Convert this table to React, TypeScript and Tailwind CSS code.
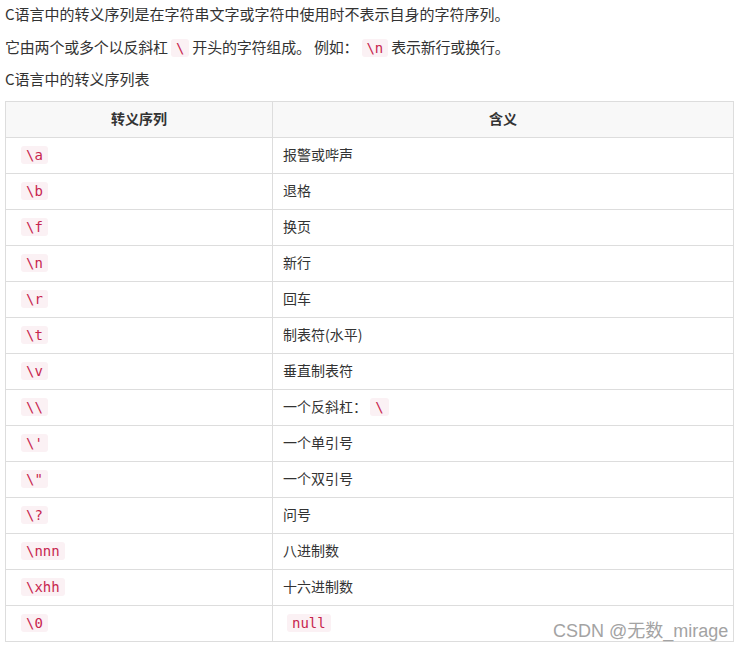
const rows: [string, React.ReactNode][] = [
  ["\\a", "报警或哔声"],
  ["\\b", "退格"],
  ["\\f", "换页"],
  ["\\n", "新行"],
  ["\\r", "回车"],
  ["\\t", "制表符(水平)"],
  ["\\v", "垂直制表符"],
  ["\\\\", <>一个反斜杠： <Code>\</Code></>],
  ["\\'", "一个单引号"],
  ['\\"', "一个双引号"],
  ["\\?", "问号"],
  ["\\nnn", "八进制数"],
  ["\\xhh", "十六进制数"],
  ["\\0", <span className="pl-1"><Code>null</Code></span>],
];

function Code({ children }: { children: React.ReactNode }) {
  return (
    <code className="rounded-[3px] bg-[#fbf1f4] px-[5px] py-[1px] font-['DejaVu_Sans_Mono',monospace] text-[14px] leading-[16px] text-[#c7254e]">
      {children}
    </code>
  );
}

export default function App() {
  return (
    <div className="relative h-[651px] w-[743px] bg-white pl-[5px] font-['Noto_Sans_CJK_SC','Noto_Sans',sans-serif] text-[#333]">
      <p className="h-[28px] text-[15px] leading-[28px]">
        C语言中的转义序列是在字符串文字或字符中使用时不表示自身的字符序列。
      </p>
      <p className="mt-[4.5px] h-[28px] text-[15px] leading-[28px] tracking-[-0.2px]">
        它由两个或多个以反斜杠 <Code>\</Code> 开头的字符组成。 例如： <Code>\n</Code> 表示新行或换行。
      </p>
      <p className="mt-[4.5px] h-[28px] text-[15px] leading-[28px]">C语言中的转义序列表</p>

      <table className="mt-[8px] w-[729px] border-collapse text-[14px]">
        <thead>
          <tr className="h-[36px] bg-[#f8f8f8]">
            <th className="w-[267px] border border-[#ddd] pb-[2px] font-bold">转义序列</th>
            <th className="border border-[#ddd] pb-[2px] font-bold">含义</th>
          </tr>
        </thead>
        <tbody>
          {rows.map(([seq, meaning]) => (
            <tr key={seq} className="h-[36px]">
              <td className="border border-[#ddd] pb-[2px] pl-[15px]">
                <Code>{seq}</Code>
              </td>
              <td className="border border-[#ddd] pb-[2px] pl-[10px]">{meaning}</td>
            </tr>
          ))}
        </tbody>
      </table>

      <div className="absolute left-[553px] top-[618px] font-['Liberation_Sans','Noto_Sans_CJK_SC',sans-serif] text-[18px] leading-[26px] text-[#a3a3a3]">
        CSDN @无数_mirage
      </div>
    </div>
  );
}
